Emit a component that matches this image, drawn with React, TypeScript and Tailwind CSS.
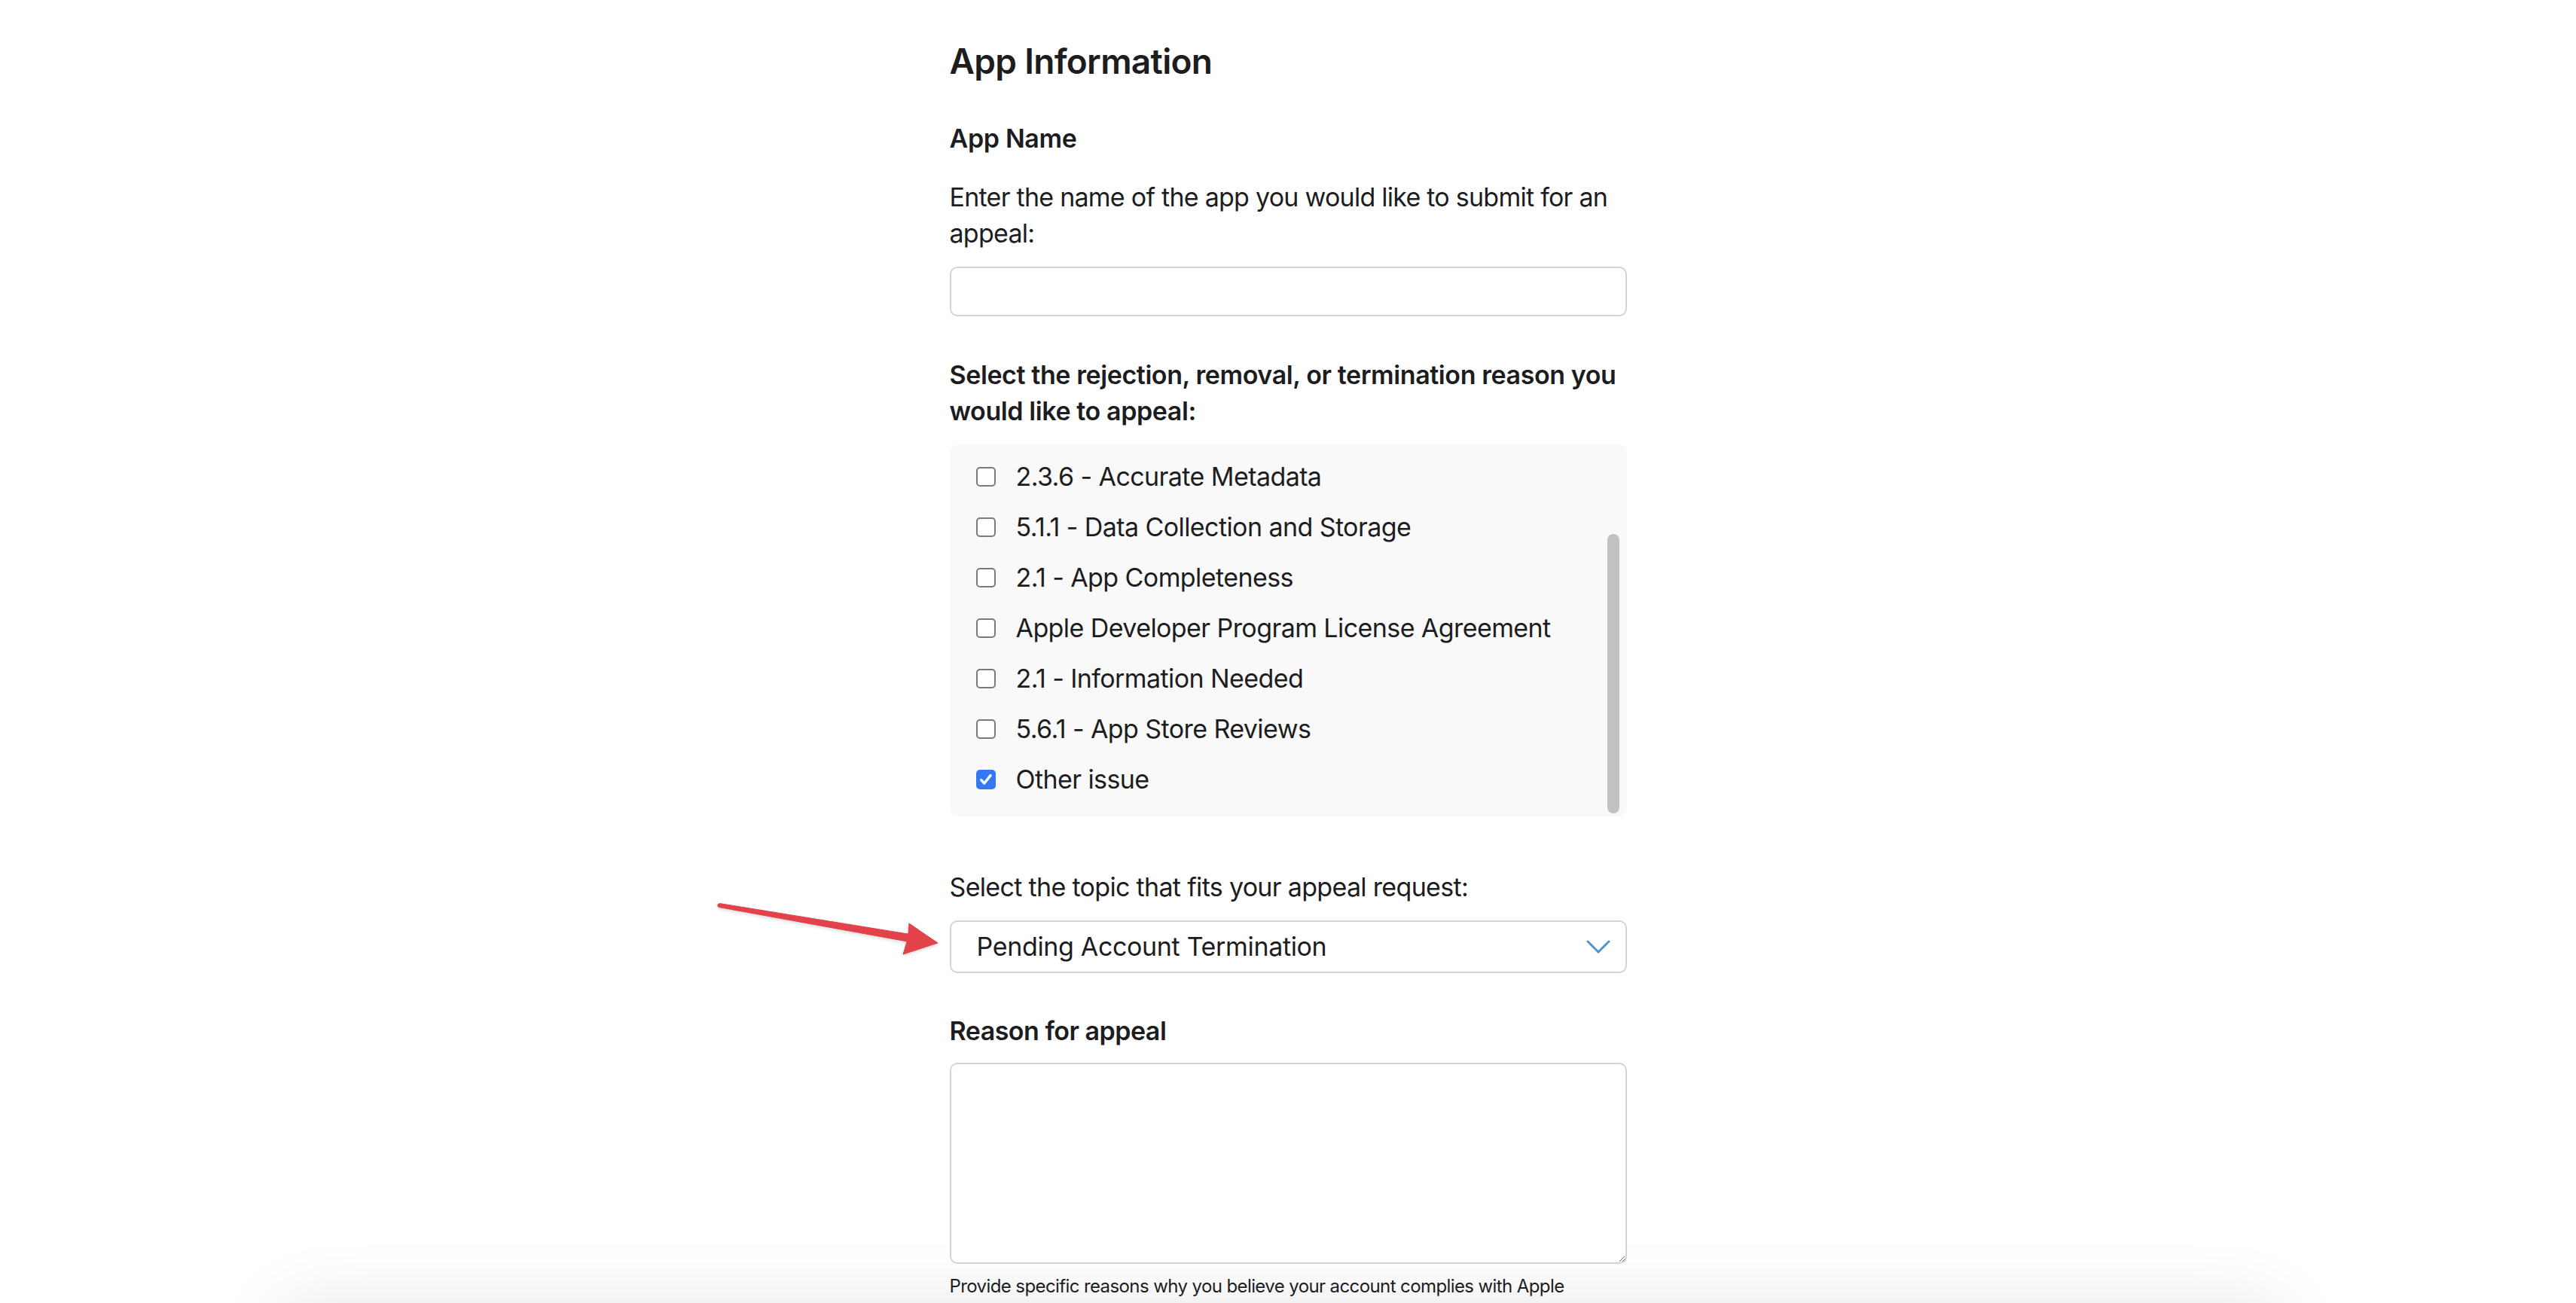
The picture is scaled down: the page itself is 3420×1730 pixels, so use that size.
import React from "react";

const items = [
  { label: "2.3.6 - Accurate Metadata", checked: false },
  { label: "5.1.1 - Data Collection and Storage", checked: false },
  { label: "2.1 - App Completeness", checked: false },
  { label: "Apple Developer Program License Agreement", checked: false },
  { label: "2.1 - Information Needed", checked: false },
  { label: "5.6.1 - App Store Reviews", checked: false },
  { label: "Other issue", checked: true },
];

function Checkbox({ checked }: { checked: boolean }) {
  if (checked) {
    return (
      <span className="flex h-[26px] w-[26px] shrink-0 items-center justify-center rounded-[5px] bg-[#3478f6]">
        <svg viewBox="0 0 26 26" className="h-[26px] w-[26px]">
          <path
            d="M6.8 13.6 L10.8 18 L19 7.6"
            fill="none"
            stroke="white"
            strokeWidth="3.4"
            strokeLinecap="round"
            strokeLinejoin="round"
          />
        </svg>
      </span>
    );
  }
  return <span className="block h-[26px] w-[26px] shrink-0 rounded-[5px] border-2 border-[#7a7a7a] bg-white" />;
}

export default function App() {
  return (
    <div className="relative isolate h-[1730px] w-full overflow-hidden bg-white font-['Inter','Liberation_Sans',sans-serif] text-[#1d1d1f]">
      <div className="mx-auto w-[899px] pt-[53px]">
        <h1 className="text-[46px] font-semibold leading-[56px] tracking-[-0.015em]">App Information</h1>
        <h2 className="mt-[51px] text-[34px] font-semibold leading-[48px] tracking-[-0.01em]">App Name</h2>
        <p className="mt-[30px] text-[34px] leading-[48px] tracking-[-0.022em]">
          Enter the name of the app you would like to submit for an
          <br />
          appeal:
        </p>
        <input
          type="text"
          className="mt-[20px] block h-[66px] w-full rounded-[10px] border-2 border-[#d4d4d4] bg-white outline-none"
        />
        <p className="mt-[54px] text-[34px] font-semibold leading-[48px] tracking-[-0.012em]">
          Select the rejection, removal, or termination reason you
          <br />
          would like to appeal:
        </p>
        <div className="relative mt-[20px] h-[494px] overflow-hidden rounded-[12px] bg-[#f9f9f9] pl-[35px] pt-[9px]">
          {items.map((it) => (
            <div key={it.label} className="flex h-[67px] items-center gap-[27px]">
              <Checkbox checked={it.checked} />
              <span className="text-[34px] leading-[48px] tracking-[-0.017em]">{it.label}</span>
            </div>
          ))}
          <div className="absolute right-[10px] top-[119px] h-[371px] w-[16px] rounded-full bg-[#c1c1c1]" />
        </div>
        <p className="mt-[70px] text-[34px] leading-[48px] tracking-[-0.02em]">
          Select the topic that fits your appeal request:
        </p>
        <div className="mt-[20px] flex h-[70px] w-full items-center justify-between rounded-[10px] border-2 border-[#d4d4d4] bg-white pl-[34px] pr-[20px]">
          <span className="text-[34px] leading-[48px] tracking-[-0.01em]">Pending Account Termination</span>
          <svg viewBox="0 0 32 19" className="h-[19px] w-[32px]">
            <polyline
              points="2,2 16,16 30,2"
              fill="none"
              stroke="#4f94cf"
              strokeWidth="3"
              strokeLinecap="round"
              strokeLinejoin="round"
            />
          </svg>
        </div>
        <h2 className="mt-[53px] text-[34px] font-semibold leading-[48px] tracking-[-0.015em]">Reason for appeal</h2>
        <textarea className="mt-[18px] block h-[267px] w-full rounded-[10px] border-2 border-[#d4d4d4] bg-white outline-none" />
        <p className="mt-[14px] text-[24px] leading-[32px] tracking-[-0.025em]">
          Provide specific reasons why you believe your account complies with Apple
        </p>
      </div>

      <svg
        className="pointer-events-none absolute left-[940px] top-[1185px] h-[100px] w-[320px] drop-shadow-[0_2px_2px_rgba(0,0,0,0.15)]"
        viewBox="0 0 320 100"
      >
        <polygon
          points="15.4,14.5 265.85,55.1 267,41 305,67 259,82 264.15,64.9 14.6,19.5"
          fill="#e2434b"
          strokeLinejoin="round"
          stroke="#e2434b"
          strokeWidth="1"
        />
        <circle cx="15" cy="17" r="2.6" fill="#e2434b" />
      </svg>

      <div className="absolute left-[400px] right-[420px] top-[1760px] -z-10 h-[200px] bg-white shadow-[0_0_100px_20px_rgba(0,0,0,0.12)]" />
    </div>
  );
}
